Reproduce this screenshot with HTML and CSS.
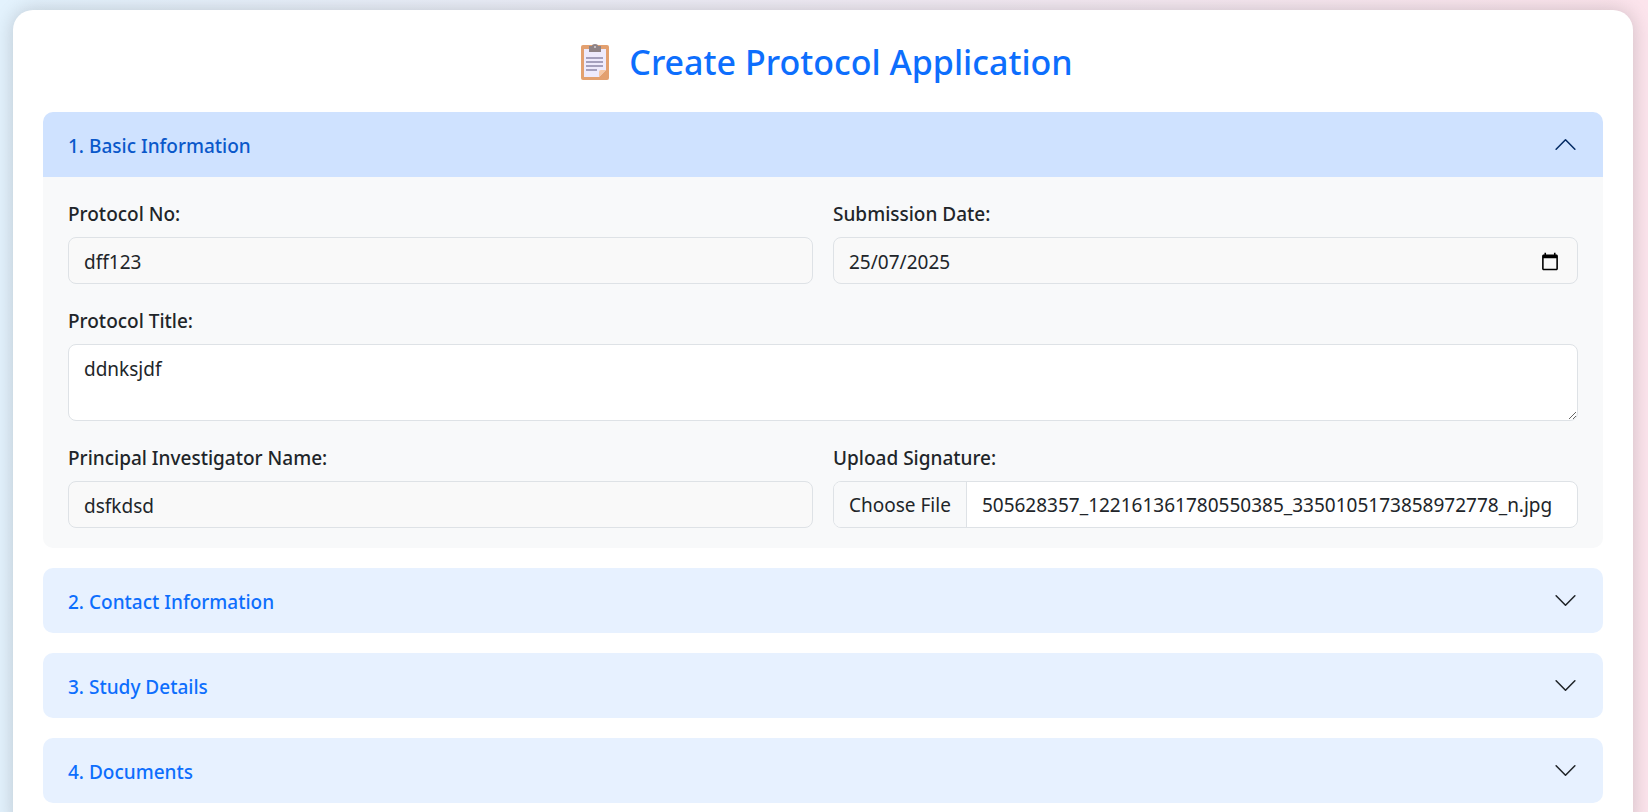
FILE: index.html
```html
<!DOCTYPE html>
<html lang="en-GB">
<head>
    <meta charset="UTF-8">
    <meta name="viewport" content="width=device-width, initial-scale=1.0">
    <title>Create Protocol Application</title>
    <link rel="stylesheet" href="styles.css">
</head>
<body>
    <main class="container">
        <h1 class="page-title">
            <svg class="title-icon" viewBox="0 0 28 36" aria-hidden="true">
                <rect x="0" y="1" width="28" height="35" rx="2" fill="#e3a06f"/>
                <path d="M3 5h22v21l-7 7H3z" fill="#eeeafc"/>
                <path d="M25 26l-7 7v-5q0-2 2-2z" fill="#f6c7a4"/>
                <path d="M8 2h3q0-2 3-2t3 2h3v6H8z" fill="#8e8285"/>
                <circle cx="14" cy="3" r="1" fill="#d9d2d6"/>
                <path d="M5 14h17M5 18h17M5 22h17M5 26h11" stroke="#8d88a8" stroke-width="1.4"/>
            </svg>
            <span>Create Protocol Application</span>
        </h1>

        <form class="accordion">
            <section class="accordion-item open">
                <h2 class="accordion-header">
                    <button type="button" class="accordion-button" aria-expanded="true">
                        <span>1. Basic Information</span>
                        <svg class="chevron" viewBox="0 0 16 16" aria-hidden="true"><path d="M2 5l6 6 6-6"/></svg>
                    </button>
                </h2>
                <div class="accordion-body">
                    <div class="field">
                        <label for="protocol_no">Protocol No:</label>
                        <input type="text" id="protocol_no" class="form-control readonly" value="dff123" readonly>
                    </div>
                    <div class="field">
                        <label for="submission_date">Submission Date:</label>
                        <input type="date" id="submission_date" class="form-control readonly" value="2025-07-25">
                    </div>
                    <div class="field full">
                        <label for="protocol_title">Protocol Title:</label>
                        <textarea id="protocol_title" class="form-control" rows="2">ddnksjdf</textarea>
                    </div>
                    <div class="field">
                        <label for="investigator">Principal Investigator Name:</label>
                        <input type="text" id="investigator" class="form-control readonly" value="dsfkdsd" readonly>
                    </div>
                    <div class="field">
                        <label for="signature">Upload Signature:</label>
                        <input type="file" id="signature" class="form-control" accept="image/*">
                    </div>
                </div>
            </section>

            <section class="accordion-item">
                <h2 class="accordion-header">
                    <button type="button" class="accordion-button" aria-expanded="false">
                        <span>2. Contact Information</span>
                        <svg class="chevron" viewBox="0 0 16 16" aria-hidden="true"><path d="M2 5l6 6 6-6"/></svg>
                    </button>
                </h2>
            </section>

            <section class="accordion-item">
                <h2 class="accordion-header">
                    <button type="button" class="accordion-button" aria-expanded="false">
                        <span>3. Study Details</span>
                        <svg class="chevron" viewBox="0 0 16 16" aria-hidden="true"><path d="M2 5l6 6 6-6"/></svg>
                    </button>
                </h2>
            </section>

            <section class="accordion-item">
                <h2 class="accordion-header">
                    <button type="button" class="accordion-button" aria-expanded="false">
                        <span>4. Documents</span>
                        <svg class="chevron" viewBox="0 0 16 16" aria-hidden="true"><path d="M2 5l6 6 6-6"/></svg>
                    </button>
                </h2>
            </section>
        </form>
    </main>

    <script src="script.js"></script>
</body>
</html>
```
FILE: styles.css
```css
* {
    box-sizing: border-box;
}
body {
    margin: 0;
    padding: 10px 15px 10px 13px;
    font-family: "Segoe UI", "Noto Sans", sans-serif;
    font-size: 19px;
    line-height: 30px;
    color: #212529;
    background: linear-gradient(to right, #e3f2fd, #fce4ec);
}
.container {
    padding: 30px;
    background: #fff;
    border-radius: 20px;
    box-shadow: 0 0 20px rgba(0, 0, 0, 0.18);
}
.page-title {
    display: flex;
    justify-content: center;
    align-items: center;
    gap: 20px;
    margin: 0 0 28px;
    padding-left: 8px;
    font-size: 34px;
    font-weight: 500;
    line-height: 44px;
    color: #0d6efd;
}
.title-icon {
    width: 28px;
    height: 36px;
}

/* accordion */
.accordion {
    display: flex;
    flex-direction: column;
    gap: 20px;
}
.accordion-item {
    border-radius: 10px;
    overflow: hidden;
}
.accordion-header {
    margin: 0;
}
.accordion-button {
    display: flex;
    justify-content: space-between;
    align-items: center;
    width: 100%;
    height: 65px;
    padding: 2px 25px 0;
    border: none;
    background: #e7f1ff;
    color: #0d6efd;
    font-family: inherit;
    font-size: 19px;
    font-weight: 500;
    text-align: left;
    cursor: pointer;
}
.open .accordion-button {
    background: #cfe2ff;
    color: #0a58ca;
}
.chevron {
    width: 25px;
    height: 25px;
    margin-bottom: 2px;
    fill: none;
    stroke: #212529;
    stroke-linecap: round;
    stroke-linejoin: round;
}
.open .chevron {
    stroke: #052c65;
    transform: rotate(180deg);
}
.accordion-body {
    display: grid;
    grid-template-columns: 1fr 1fr;
    gap: 20px;
    padding: 20px 25px;
    background: #f8f9fa;
}

/* form fields */
.field {
    display: flex;
    flex-direction: column;
    gap: 6px;
    min-width: 0;
}
.full {
    grid-column: 1 / -1;
}
.field label {
    line-height: 34px;
    font-weight: 500;
    color: #212529;
}
.form-control {
    width: 100%;
    height: 47px;
    padding: 9px 15px 6px;
    border: 1px solid #dee2e6;
    border-radius: 8px;
    background: #fff;
    color: #212529;
    font-family: inherit;
    font-size: 19px;
    line-height: 30px;
}
.readonly {
    background: #f9f9f9;
}
textarea.form-control {
    height: 77px;
    resize: vertical;
}

/* day / month / year, the separators fill the free columns */
::-webkit-datetime-edit-fields-wrapper {
    display: inline-grid;
    grid-auto-flow: column;
    padding: 0;
}
::-webkit-datetime-edit-text {
    grid-row: 1;
    padding: 0;
}
::-webkit-datetime-edit-day-field {
    grid-area: 1 / 1;
    padding: 0;
}
::-webkit-datetime-edit-month-field {
    grid-area: 1 / 3;
    padding: 0;
}
::-webkit-datetime-edit-year-field {
    grid-area: 1 / 5;
    padding: 0;
}
::-webkit-calendar-picker-indicator {
    width: 20px;
    height: 20px;
}

input[type="file"] {
    padding: 0;
    line-height: 47px;
    overflow: hidden;
}
::file-selector-button {
    height: 47px;
    margin: 0 15px 0 0;
    padding: 0 15px;
    border: none;
    border-right: 1px solid #dee2e6;
    background: #f8f9fa;
    color: #212529;
    font: inherit;
}
```
FILE: script.js
```js
// keep the signature file selected
const signature = document.getElementById('signature');
const transfer = new DataTransfer();
transfer.items.add(new File([''], '505628357_122161361780550385_3350105173858972778_n.jpg', { type: 'image/jpeg' }));
signature.files = transfer.files;
```
